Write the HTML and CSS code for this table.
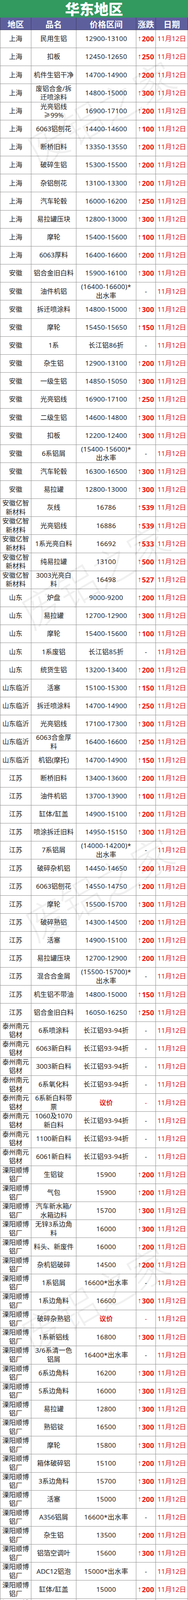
FILE: index.html
```html
<!DOCTYPE html>
<html lang="zh-CN">
<head>
<meta charset="utf-8">
<title>华东地区</title>
<link rel="stylesheet" href="styles.css">
</head>
<body>
<div class="sheet">
<div class="title">华东地区</div>
<div class="row head"><div class="c">地区</div><div class="c">品名</div><div class="c">价格区间</div><div class="c">涨跌</div><div class="c">日期</div></div>
<div class="row"><div class="c a">上海</div><div class="c n">民用生铝</div><div class="c p">12900-13100</div><div class="c u"><i>↑</i>200</div><div class="c d">11月12日</div></div>
<div class="row"><div class="c a">上海</div><div class="c n">扣板</div><div class="c p">12450-12650</div><div class="c u"><i>↑</i>250</div><div class="c d">11月12日</div></div>
<div class="row"><div class="c a">上海</div><div class="c n">机件生铝干净</div><div class="c p">14700-14900</div><div class="c u"><i>↑</i>200</div><div class="c d">11月12日</div></div>
<div class="row"><div class="c a">上海</div><div class="c n">废铝合金/拆迁喷涂料</div><div class="c p">14800-15000</div><div class="c u"><i>↑</i>300</div><div class="c d">11月12日</div></div>
<div class="row"><div class="c a">上海</div><div class="c n">光亮铝线≥99%</div><div class="c p">16900-17100</div><div class="c u"><i>↑</i>200</div><div class="c d">11月12日</div></div>
<div class="row"><div class="c a">上海</div><div class="c n">6063铝刨花</div><div class="c p">14400-14600</div><div class="c u"><i>↑</i>100</div><div class="c d">11月12日</div></div>
<div class="row"><div class="c a">上海</div><div class="c n">断桥旧料</div><div class="c p">13350-13550</div><div class="c u"><i>↑</i>200</div><div class="c d">11月12日</div></div>
<div class="row"><div class="c a">上海</div><div class="c n">破碎生铝</div><div class="c p">15300-15500</div><div class="c u"><i>↑</i>200</div><div class="c d">11月12日</div></div>
<div class="row"><div class="c a">上海</div><div class="c n">杂铝刨花</div><div class="c p">13100-13300</div><div class="c u"><i>↑</i>200</div><div class="c d">11月12日</div></div>
<div class="row"><div class="c a">上海</div><div class="c n">汽车轮毂</div><div class="c p">16000-16200</div><div class="c u"><i>↑</i>250</div><div class="c d">11月12日</div></div>
<div class="row"><div class="c a">上海</div><div class="c n">易拉罐压块</div><div class="c p">12800-13000</div><div class="c u"><i>↑</i>300</div><div class="c d">11月12日</div></div>
<div class="row"><div class="c a">上海</div><div class="c n">摩轮</div><div class="c p">15400-15600</div><div class="c u"><i>↑</i>100</div><div class="c d">11月12日</div></div>
<div class="row"><div class="c a">上海</div><div class="c n">6063厚料</div><div class="c p">16400-16600</div><div class="c u"><i>↑</i>200</div><div class="c d">11月12日</div></div>
<div class="row"><div class="c a">安徽</div><div class="c n">铝合金旧白料</div><div class="c p">15900-16100</div><div class="c u"><i>↑</i>300</div><div class="c d">11月12日</div></div>
<div class="row"><div class="c a">安徽</div><div class="c n">油件机铝</div><div class="c p">(16400-16600)*出水率</div><div class="c z">-</div><div class="c d">11月12日</div></div>
<div class="row"><div class="c a">安徽</div><div class="c n">拆迁喷涂料</div><div class="c p">14800-15000</div><div class="c u"><i>↑</i>300</div><div class="c d">11月12日</div></div>
<div class="row"><div class="c a">安徽</div><div class="c n">摩轮</div><div class="c p">15450-15650</div><div class="c u"><i>↑</i>150</div><div class="c d">11月12日</div></div>
<div class="row"><div class="c a">安徽</div><div class="c n">1系</div><div class="c p">长江铝86折</div><div class="c z">-</div><div class="c d">11月12日</div></div>
<div class="row"><div class="c a">安徽</div><div class="c n">杂生铝</div><div class="c p">12900-13100</div><div class="c u"><i>↑</i>200</div><div class="c d">11月12日</div></div>
<div class="row"><div class="c a">安徽</div><div class="c n">一级生铝</div><div class="c p">14850-15050</div><div class="c u"><i>↑</i>300</div><div class="c d">11月12日</div></div>
<div class="row"><div class="c a">安徽</div><div class="c n">光亮铝线</div><div class="c p">16900-17100</div><div class="c u"><i>↑</i>250</div><div class="c d">11月12日</div></div>
<div class="row"><div class="c a">安徽</div><div class="c n">二级生铝</div><div class="c p">14600-14800</div><div class="c u"><i>↑</i>300</div><div class="c d">11月12日</div></div>
<div class="row"><div class="c a">安徽</div><div class="c n">扣板</div><div class="c p">12200-12400</div><div class="c u"><i>↑</i>300</div><div class="c d">11月12日</div></div>
<div class="row"><div class="c a">安徽</div><div class="c n">6系铝屑</div><div class="c p">(15400-15600)*出水率</div><div class="c z">-</div><div class="c d">11月12日</div></div>
<div class="row"><div class="c a">安徽</div><div class="c n">汽车轮毂</div><div class="c p">16300-16500</div><div class="c u"><i>↑</i>300</div><div class="c d">11月12日</div></div>
<div class="row"><div class="c a">安徽</div><div class="c n">易拉罐</div><div class="c p">12800-13000</div><div class="c u"><i>↑</i>300</div><div class="c d">11月12日</div></div>
<div class="row"><div class="c a">安徽亿智新材料</div><div class="c n">灰线</div><div class="c p">16786</div><div class="c u"><i>↑</i>539</div><div class="c d">11月12日</div></div>
<div class="row"><div class="c a">安徽亿智新材料</div><div class="c n">光亮铝线</div><div class="c p">16886</div><div class="c u"><i>↑</i>539</div><div class="c d">11月12日</div></div>
<div class="row"><div class="c a">安徽亿智新材料</div><div class="c n">1系光亮白料</div><div class="c p">16692</div><div class="c u"><i>↑</i>533</div><div class="c d">11月12日</div></div>
<div class="row"><div class="c a">安徽亿智新材料</div><div class="c n">纯易拉罐</div><div class="c p">13100</div><div class="c u"><i>↑</i>500</div><div class="c d">11月12日</div></div>
<div class="row"><div class="c a">安徽亿智新材料</div><div class="c n">3003光亮白料</div><div class="c p">16498</div><div class="c u"><i>↑</i>527</div><div class="c d">11月12日</div></div>
<div class="row"><div class="c a">山东</div><div class="c n">炉盘</div><div class="c p">9000-9200</div><div class="c u"><i>↑</i>200</div><div class="c d">11月12日</div></div>
<div class="row"><div class="c a">山东</div><div class="c n">易拉罐</div><div class="c p">12700-12900</div><div class="c u"><i>↑</i>300</div><div class="c d">11月12日</div></div>
<div class="row"><div class="c a">山东</div><div class="c n">摩轮</div><div class="c p">15400-15600</div><div class="c u"><i>↑</i>100</div><div class="c d">11月12日</div></div>
<div class="row"><div class="c a">山东</div><div class="c n">1系废铝</div><div class="c p">长江铝85折</div><div class="c z">-</div><div class="c d">11月12日</div></div>
<div class="row"><div class="c a">山东</div><div class="c n">统货生铝</div><div class="c p">13200-13400</div><div class="c u"><i>↑</i>200</div><div class="c d">11月12日</div></div>
<div class="row"><div class="c a">山东临沂</div><div class="c n">活塞</div><div class="c p">15100-15300</div><div class="c u"><i>↑</i>150</div><div class="c d">11月12日</div></div>
<div class="row"><div class="c a">山东临沂</div><div class="c n">拆迁喷涂料</div><div class="c p">14700-14900</div><div class="c u"><i>↑</i>250</div><div class="c d">11月12日</div></div>
<div class="row"><div class="c a">山东临沂</div><div class="c n">光亮铝线</div><div class="c p">17100-17300</div><div class="c u"><i>↑</i>300</div><div class="c d">11月12日</div></div>
<div class="row"><div class="c a">山东临沂</div><div class="c n">6063合金厚料</div><div class="c p">16400-16600</div><div class="c u"><i>↑</i>250</div><div class="c d">11月12日</div></div>
<div class="row"><div class="c a">山东临沂</div><div class="c n">机铝(摩托)</div><div class="c p">14700-14900</div><div class="c u"><i>↑</i>150</div><div class="c d">11月12日</div></div>
<div class="row"><div class="c a">江苏</div><div class="c n">断桥旧料</div><div class="c p">13400-13600</div><div class="c u"><i>↑</i>200</div><div class="c d">11月12日</div></div>
<div class="row"><div class="c a">江苏</div><div class="c n">油件机铝</div><div class="c p">13700-13900</div><div class="c u"><i>↑</i>100</div><div class="c d">11月12日</div></div>
<div class="row"><div class="c a">江苏</div><div class="c n">缸体/缸盖</div><div class="c p">14900-15100</div><div class="c u"><i>↑</i>200</div><div class="c d">11月12日</div></div>
<div class="row"><div class="c a">江苏</div><div class="c n">喷涂拆迁旧料</div><div class="c p">14950-15150</div><div class="c u"><i>↑</i>300</div><div class="c d">11月12日</div></div>
<div class="row"><div class="c a">江苏</div><div class="c n">7系铝屑</div><div class="c p">(14000-14200)*出水率</div><div class="c z">-</div><div class="c d">11月12日</div></div>
<div class="row"><div class="c a">江苏</div><div class="c n">破碎杂机铝</div><div class="c p">14450-14650</div><div class="c u"><i>↑</i>200</div><div class="c d">11月12日</div></div>
<div class="row"><div class="c a">江苏</div><div class="c n">6063铝刨花</div><div class="c p">14550-14750</div><div class="c u"><i>↑</i>200</div><div class="c d">11月12日</div></div>
<div class="row"><div class="c a">江苏</div><div class="c n">摩轮</div><div class="c p">15500-15700</div><div class="c u"><i>↑</i>300</div><div class="c d">11月12日</div></div>
<div class="row"><div class="c a">江苏</div><div class="c n">破碎熟铝</div><div class="c p">14300-14500</div><div class="c u"><i>↑</i>200</div><div class="c d">11月12日</div></div>
<div class="row"><div class="c a">江苏</div><div class="c n">活塞</div><div class="c p">14900-15100</div><div class="c u"><i>↑</i>200</div><div class="c d">11月12日</div></div>
<div class="row"><div class="c a">江苏</div><div class="c n">易拉罐压块</div><div class="c p">12700-12900</div><div class="c u"><i>↑</i>200</div><div class="c d">11月12日</div></div>
<div class="row"><div class="c a">江苏</div><div class="c n">混合合金屑</div><div class="c p">(15500-15700)*出水率</div><div class="c z">-</div><div class="c d">11月12日</div></div>
<div class="row"><div class="c a">江苏</div><div class="c n">机生铝不带油</div><div class="c p">14800-15000</div><div class="c u"><i>↑</i>150</div><div class="c d">11月12日</div></div>
<div class="row"><div class="c a">江苏</div><div class="c n">铝合金旧白料</div><div class="c p">16050-16250</div><div class="c u"><i>↑</i>250</div><div class="c d">11月12日</div></div>
<div class="row"><div class="c a">泰州南元铝材</div><div class="c n">6系喷涂料</div><div class="c p">长江铝93-94折</div><div class="c z">-</div><div class="c d">11月12日</div></div>
<div class="row"><div class="c a">泰州南元铝材</div><div class="c n">6063新白料</div><div class="c p">长江铝93-94折</div><div class="c z">-</div><div class="c d">11月12日</div></div>
<div class="row"><div class="c a">泰州南元铝材</div><div class="c n">3003新白料</div><div class="c p">长江铝93-94折</div><div class="c z">-</div><div class="c d">11月12日</div></div>
<div class="row"><div class="c a">泰州南元铝材</div><div class="c n">6系氧化料</div><div class="c p">长江铝93-94折</div><div class="c z">-</div><div class="c d">11月12日</div></div>
<div class="row"><div class="c a">泰州南元铝材</div><div class="c n">6系新白料带票</div><div class="c p neg">议价</div><div class="c z red">-</div><div class="c d">11月12日</div></div>
<div class="row"><div class="c a">泰州南元铝材</div><div class="c n">1060及1070新白料</div><div class="c p">长江铝93-94折</div><div class="c z">-</div><div class="c d">11月12日</div></div>
<div class="row"><div class="c a">泰州南元铝材</div><div class="c n">1100新白料</div><div class="c p">长江铝93-94折</div><div class="c z">-</div><div class="c d">11月12日</div></div>
<div class="row"><div class="c a">泰州南元铝材</div><div class="c n">6061新白料</div><div class="c p">长江铝93-94折</div><div class="c z">-</div><div class="c d">11月12日</div></div>
<div class="row"><div class="c a">溧阳顺博铝厂</div><div class="c n">生铝锭</div><div class="c p">15900</div><div class="c u"><i>↑</i>200</div><div class="c d">11月12日</div></div>
<div class="row"><div class="c a">溧阳顺博铝厂</div><div class="c n">气包</div><div class="c p">15900</div><div class="c u"><i>↑</i>200</div><div class="c d">11月12日</div></div>
<div class="row"><div class="c a">溧阳顺博铝厂</div><div class="c n">汽车新水箱/水箱边料</div><div class="c p">15700</div><div class="c u"><i>↑</i>300</div><div class="c d">11月12日</div></div>
<div class="row"><div class="c a">溧阳顺博铝厂</div><div class="c n">无锌3系边角料</div><div class="c p">16000</div><div class="c u"><i>↑</i>300</div><div class="c d">11月12日</div></div>
<div class="row"><div class="c a">溧阳顺博铝厂</div><div class="c n">料头、新废件</div><div class="c p">16000</div><div class="c u"><i>↑</i>200</div><div class="c d">11月12日</div></div>
<div class="row"><div class="c a">溧阳顺博铝厂</div><div class="c n">杂机铝破碎</div><div class="c p">14500</div><div class="c u"><i>↑</i>200</div><div class="c d">11月12日</div></div>
<div class="row"><div class="c a">溧阳顺博铝厂</div><div class="c n">1系铝屑</div><div class="c p">16600*出水率</div><div class="c z">-</div><div class="c d">11月12日</div></div>
<div class="row"><div class="c a">溧阳顺博铝厂</div><div class="c n">1系边角料</div><div class="c p">16600</div><div class="c u"><i>↑</i>300</div><div class="c d">11月12日</div></div>
<div class="row"><div class="c a">溧阳顺博铝厂</div><div class="c n">破碎杂熟铝</div><div class="c p neg">议价</div><div class="c z red">-</div><div class="c d">11月12日</div></div>
<div class="row"><div class="c a">溧阳顺博铝厂</div><div class="c n">1系新铝线</div><div class="c p">16800</div><div class="c u"><i>↑</i>300</div><div class="c d">11月12日</div></div>
<div class="row"><div class="c a">溧阳顺博铝厂</div><div class="c n">3/6系清一色铝屑</div><div class="c p">16400*出水率</div><div class="c z">-</div><div class="c d">11月12日</div></div>
<div class="row"><div class="c a">溧阳顺博铝厂</div><div class="c n">6系边角料</div><div class="c p">16200</div><div class="c u"><i>↑</i>300</div><div class="c d">11月12日</div></div>
<div class="row"><div class="c a">溧阳顺博铝厂</div><div class="c n">5系边角料</div><div class="c p">16000</div><div class="c u"><i>↑</i>300</div><div class="c d">11月12日</div></div>
<div class="row"><div class="c a">溧阳顺博铝厂</div><div class="c n">易拉罐</div><div class="c p">12800</div><div class="c u"><i>↑</i>300</div><div class="c d">11月12日</div></div>
<div class="row"><div class="c a">溧阳顺博铝厂</div><div class="c n">熟铝锭</div><div class="c p">16500</div><div class="c u"><i>↑</i>300</div><div class="c d">11月12日</div></div>
<div class="row"><div class="c a">溧阳顺博铝厂</div><div class="c n">摩轮</div><div class="c p">15800</div><div class="c u"><i>↑</i>300</div><div class="c d">11月12日</div></div>
<div class="row"><div class="c a">溧阳顺博铝厂</div><div class="c n">箱体破碎铝</div><div class="c p">15100</div><div class="c u"><i>↑</i>200</div><div class="c d">11月12日</div></div>
<div class="row"><div class="c a">溧阳顺博铝厂</div><div class="c n">3系边角料</div><div class="c p">15700</div><div class="c u"><i>↑</i>300</div><div class="c d">11月12日</div></div>
<div class="row"><div class="c a">溧阳顺博铝厂</div><div class="c n">活塞</div><div class="c p">15000</div><div class="c u"><i>↑</i>200</div><div class="c d">11月12日</div></div>
<div class="row"><div class="c a">溧阳顺博铝厂</div><div class="c n">A356铝屑</div><div class="c p">16600*出水率</div><div class="c z">-</div><div class="c d">11月12日</div></div>
<div class="row"><div class="c a">溧阳顺博铝厂</div><div class="c n">杂生铝</div><div class="c p">13500</div><div class="c u"><i>↑</i>200</div><div class="c d">11月12日</div></div>
<div class="row"><div class="c a">溧阳顺博铝厂</div><div class="c n">铝箔空调叶</div><div class="c p">15600</div><div class="c u"><i>↑</i>300</div><div class="c d">11月12日</div></div>
<div class="row"><div class="c a">溧阳顺博铝厂</div><div class="c n">ADC12铝泡</div><div class="c p">15000*出水率</div><div class="c z">-</div><div class="c d">11月12日</div></div>
<div class="row"><div class="c a">溧阳顺博铝厂</div><div class="c n">缸体/缸盖</div><div class="c p">15000</div><div class="c u"><i>↑</i>200</div><div class="c d">11月12日</div></div>
<div class="row"><div class="c a">溧阳顺博铝厂</div><div class="c n">电动车轮</div><div class="c p neg">议价</div><div class="c z red">-</div><div class="c d">11月12日</div></div>
<div class="wm wm1">废铝之家</div>
<div class="wm wm2">废铝之家</div>
<div class="wm wm3">废铝之家</div>
<div class="wm wm4">废铝之家</div>
</div>
</body>
</html>
```

FILE: styles.css
```css
* { box-sizing: border-box; margin: 0; padding: 0; }
html, body { background: #ffffff; }
body {
  width: 480px;
  font-family: "Noto Sans", "Noto Sans CJK SC", sans-serif;
  font-size: 17px;
  color: #1c1c1c;
}
.sheet { width: 480px; position: relative; overflow: hidden; }
.title {
  height: 45px;
  background: #32995f;
  color: #ffffff;
  font-family: "Noto Sans CJK SC", sans-serif;
  font-size: 37px;
  font-weight: 900;
  line-height: 45px;
  text-align: center;
}
.row {
  display: grid;
  grid-template-columns: 79px 115px 153px 50px 82px;
  height: 46.16px;
  border-left: 1px solid #8e8e8e;
  border-bottom: 1px solid #8e8e8e;
}
.c {
  display: flex;
  align-items: center;
  justify-content: center;
  text-align: center;
  border-right: 1px solid #8e8e8e;
  line-height: 22.5px;
  padding: 0 4px;
}
.row.head {
  height: 32px;
  background: #5d5f9d;
  color: #ffffff;
  border-left-color: #3c3d5e;
  border-bottom-color: #3c3d5e;
}
.row.head .c {
  font-family: "Noto Sans CJK SC", sans-serif;
  font-size: 21px;
  font-weight: 700;
  border-right-color: #3c3d5e;
  padding: 0;
  line-height: 30px;
}
.n { padding: 0 5px; }
.p { padding: 0 5px; letter-spacing: 0.4px; }
.p.neg { color: #e8141c; font-weight: 700; letter-spacing: 0; }
.u {
  color: #ee1010;
  font-weight: 700;
  font-size: 18px;
  padding: 0;
}
.u i {
  font-style: normal;
  font-weight: 400;
  font-family: "Liberation Sans", sans-serif;
  font-size: 19px;
  margin-right: 1px;
}
.z { padding: 0; }
.z.red { color: #e8141c; }
.d { color: #e3141c; padding: 0; }
.wm {
  position: absolute;
  width: 440px;
  height: 110px;
  line-height: 110px;
  text-align: center;
  font-family: "Noto Sans CJK SC", sans-serif;
  font-weight: 300;
  font-size: 104px;
  color: rgba(0, 0, 0, 0.06);
  transform: rotate(-30deg);
  pointer-events: none;
  white-space: nowrap;
}
.wm1 { left: 35px; top: 230px; }
.wm2 { left: 20px; top: 1415px; }
.wm3 { left: 30px; top: 2215px; }
.wm4 { left: 20px; top: 3265px; }
```
